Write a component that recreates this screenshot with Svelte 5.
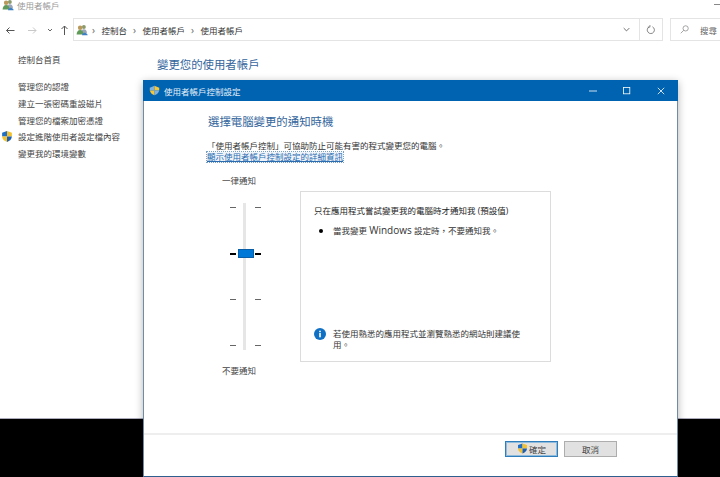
<script>
  const crumbs = ["控制台", "使用者帳戶", "使用者帳戶"];
  const navLinks = [
    { label: "管理您的認證" },
    { label: "建立一張密碼重設磁片" },
    { label: "管理您的檔案加密憑證" },
    { label: "設定進階使用者設定檔內容", shield: true },
    { label: "變更我的環境變數" },
  ];
  // slider stops, top to bottom; index 1 is the selected level
  const stops = [0, 1, 2, 3];
</script>

{#snippet users()}
  <svg class="users" viewBox="0 0 16 16" aria-hidden="true">
    <circle cx="10.5" cy="4" r="2.6" fill="#8a9a6a" />
    <path d="M6.5 12c0-3 1.6-5 4-5s4 2 4 5z" fill="#9aa6b8" />
    <circle cx="5.5" cy="5" r="3" fill="#b9985c" />
    <path d="M.8 14c0-3.6 2-6 4.7-6s4.7 2.400 4.700 6z" fill="#5f9a58" />
    <path d="M8 15c0-2 1.600-3.400 3.500-3.400S15.500 13 15.500 15z" fill="#3f7fc4" />
  </svg>
{/snippet}

{#snippet shield(cls)}
  <svg class={cls} viewBox="0 0 16 16" aria-hidden="true">
    <path d="M8 .6 1.500 3v5H8z" fill="#1f6fc4" />
    <path d="M8 .6V8h6.500V3z" fill="#f2c230" />
    <path d="M1.500 8c0 3.600 3 6 6.500 7.400V8z" fill="#f2c230" />
    <path d="M8 8v7.400c3.500-1.400 6.500-3.800 6.500-7.400z" fill="#1f5fae" />
  </svg>
{/snippet}

<div class="desktop">
  <div class="explorer">
    <div class="title-row">
      {@render users()}
      <span>使用者帳戶</span>
      <i class="win-min"></i>
    </div>

    <div class="toolbar">
      <div class="nav-btns">
        <svg viewBox="0 0 62 14" aria-hidden="true">
          <path d="M.5 7.500h8M.5 7.500l3-3M.5 7.500l3 3" stroke="#555" fill="none" />
          <path d="M22 7.500h8M30 7.500l-3-3M30 7.500l-3 3" stroke="#c8c8c8" fill="none" />
          <path d="M42 6l2 2 2-2" stroke="#666" fill="none" />
          <path d="M58.500 12V3M58.500 3l-3 3M58.500 3l3 3" stroke="#555" fill="none" />
        </svg>
      </div>
      <div class="address">
        {@render users()}
        {#each crumbs as c}
          <span class="sep">›</span>
          <span class="crumb">{c}</span>
        {/each}
        <svg class="chev" viewBox="0 0 10 6" aria-hidden="true">
          <path d="M1 1l4 4 4-4" stroke="#555" stroke-width="1.200" fill="none" />
        </svg>
      </div>
      <div class="refresh">
        <svg viewBox="0 0 14 14" aria-hidden="true">
          <path d="M9 2.500a5 5 0 1 1-4.500 0" stroke="#666" stroke-width="1.100" fill="none" />
          <path d="M4.500 0v3h-3" stroke="#666" fill="none" transform="translate(1 0)" />
        </svg>
      </div>
      <div class="search">
        <svg viewBox="0 0 12 12" aria-hidden="true">
          <circle cx="7.500" cy="4.500" r="3.500" stroke="#888" fill="none" />
          <path d="M5 7l-4 4" stroke="#888" />
        </svg>
        <span>搜尋</span>
      </div>
    </div>

    <div class="content">
      <nav class="side">
        <div class="home">控制台首頁</div>
        <ul>
          {#each navLinks as link}
            <li>
              {#if link.shield}{@render shield("nav-shield")}{/if}
              {link.label}
            </li>
          {/each}
        </ul>
      </nav>
      <h2 class="page-title">變更您的使用者帳戶</h2>
    </div>
  </div>

  <div class="dialog">
    <header class="dlg-title">
      <svg class="pin" viewBox="0 0 14 14" aria-hidden="true">
        <path d="M7 1 1 3.500V7h6z" fill="#7fb2e0" />
        <path d="M7 1l6 2.500V7H7z" fill="#f5c53a" />
        <path d="M1 7h6v6C4 12 1.500 10 1 7z" fill="#f5c53a" />
        <path d="M7 7h6c-.500 3-3 5-6 6z" fill="#7fb2e0" />
      </svg>
      <span>使用者帳戶控制設定</span>
      <div class="win-btns">
        <svg viewBox="0 0 10 10" aria-hidden="true"><path d="M0 5h10" stroke="#fff" /></svg>
        <svg viewBox="0 0 10 10" aria-hidden="true"><rect x=".5" y=".5" width="8" height="8" stroke="#fff" fill="none" /></svg>
        <svg viewBox="0 0 10 10" aria-hidden="true"><path d="M1 1l8 8M9 1l-8 8" stroke="#fff" /></svg>
      </div>
    </header>

    <div class="dlg-body">
      <h1>選擇電腦變更的通知時機</h1>
      <p class="intro">「使用者帳戶控制」可協助防止可能有害的程式變更您的電腦。</p>
      <span class="link">顯示使用者帳戶控制設定的詳細資訊</span>

      <div class="settings">
        <div class="slider-col">
          <div class="slider-label">一律通知</div>
          <div class="slider">
            <i class="track"></i>
            {#each stops as s}
              <div class="stop" class:on={s === 1}>
                <i class="tick"></i>
                {#if s === 1}<i class="thumb"></i>{/if}
                <i class="tick"></i>
              </div>
            {/each}
          </div>
          <div class="slider-label">不要通知</div>
        </div>

        <section class="panel">
          <h3>只在應用程式嘗試變更我的電腦時才通知我 (預設值)</h3>
          <div class="bullet">
            <i class="dot"></i>
            <span>當我變更 <span class="latin">Windows</span> 設定時，不要通知我。</span>
          </div>
          <div class="note">
            <svg viewBox="0 0 12 12" aria-hidden="true">
              <circle cx="6" cy="6" r="6" fill="#1070c4" />
              <rect x="5.200" y="5" width="1.600" height="4.300" fill="#fff" />
              <rect x="5.200" y="2.700" width="1.600" height="1.500" fill="#fff" />
            </svg>
            <p>若使用熟悉的應用程式並瀏覽熟悉的網站則建議使用。</p>
          </div>
        </section>
      </div>
    </div>

    <footer class="dlg-foot">
      <button class="primary">{@render shield("btn-shield")}確定</button>
      <button>取消</button>
    </footer>
  </div>
</div>

<style>
  :global(body) {
    margin: 0;
  }
  .desktop {
    position: relative;
    width: 720px;
    height: 477px;
    overflow: hidden;
    background: #000;
    font-family: "Open Sans", "Noto Sans CJK TC", sans-serif;
    font-size: 8.5px;
    color: #444;
  }
  i {
    display: block;
  }
  .explorer {
    height: 419px;
    box-sizing: border-box;
    background: #fff;
    border-bottom: 1px solid #aab;
  }
  .title-row {
    height: 9px;
    padding-left: 2px;
    display: flex;
    align-items: center;
    gap: 3px;
    color: #9a9a9a;
  }
  .users {
    width: 12px;
    height: 12px;
    flex: none;
  }
  .win-min {
    margin-left: auto;
    width: 6px;
    height: 1px;
    background: #888;
  }
  .toolbar {
    display: flex;
    align-items: center;
    height: 23px;
    margin-top: 9px;
    padding-left: 6px;
  }
  .nav-btns {
    width: 67px;
    flex: none;
  }
  .nav-btns svg {
    width: 62px;
    height: 14px;
    display: block;
  }
  .address {
    width: 567px;
    height: 23px;
    flex: none;
    box-sizing: border-box;
    display: flex;
    align-items: center;
    border: 1px solid #e4e4e4;
    padding-left: 2px;
  }
  .address .users {
    margin-right: 4px;
  }
  .sep {
    color: #666;
    font-size: 10px;
    width: 9.500px;
    line-height: 1;
  }
  .crumb {
    color: #333;
    margin-right: 6px;
  }
  .chev {
    margin-left: auto;
    margin-right: 9px;
    width: 7px;
    height: 5px;
  }
  .refresh {
    width: 23px;
    height: 23px;
    flex: none;
    box-sizing: border-box;
    border: 1px solid #e4e4e4;
    border-left: 0;
    display: flex;
    align-items: center;
    justify-content: center;
  }
  .refresh svg {
    width: 10px;
    height: 10px;
  }
  .search {
    margin-left: 7px;
    width: 80px;
    height: 23px;
    flex: none;
    box-sizing: border-box;
    border: 1px solid #e4e4e4;
    display: flex;
    align-items: center;
    padding-left: 9px;
    gap: 11px;
    color: #666;
  }
  .search svg {
    width: 9px;
    height: 9px;
    flex: none;
  }
  .content {
    display: flex;
    padding-top: 13px;
  }
  .side {
    width: 157px;
    flex: none;
    padding-left: 18px;
    box-sizing: border-box;
  }
  .home {
    line-height: 12px;
  }
  .side ul {
    list-style: none;
    margin: 15px 0 0;
    padding: 0;
  }
  .side li {
    position: relative;
    height: 16.750px;
    line-height: 12px;
    white-space: nowrap;
  }
  .nav-shield {
    position: absolute;
    left: -17px;
    top: -1px;
    width: 12px;
    height: 13px;
  }
  .page-title {
    margin: 3px 0 0;
    font-weight: 400;
    font-size: 11.400px;
    line-height: 16px;
    color: #33659c;
  }
  .dialog {
    position: absolute;
    left: 143px;
    top: 80px;
    width: 535px;
    height: 397px;
    box-sizing: border-box;
    background: #fff;
    border: 1px solid #6f8ba5;
    border-top: 0;
    border-bottom: 1px solid #2f5f8f;
    box-shadow: 0 2px 8px rgba(0, 0, 0, 0.3);
    display: flex;
    flex-direction: column;
  }
  .dlg-title {
    height: 21px;
    flex: none;
    margin: 0 -1px;
    background: #0063b1;
    color: #e6f0f8;
    display: flex;
    align-items: center;
    padding-left: 6px;
    gap: 4px;
  }
  .pin {
    width: 11px;
    height: 11px;
  }
  .win-btns {
    margin-left: auto;
    display: flex;
    gap: 26px;
    padding-right: 13px;
  }
  .win-btns svg {
    width: 8px;
    height: 8px;
    display: block;
  }
  .dlg-body {
    flex: 1;
    padding: 13px 0 0 63px;
  }
  h1 {
    margin: 0;
    font-weight: 400;
    font-size: 11.400px;
    line-height: 16px;
    color: #33659c;
    padding-left: 1px;
  }
  .intro {
    margin: 10px 0 0;
    line-height: 11px;
    color: #333;
    white-space: nowrap;
  }
  .link {
    display: inline-block;
    line-height: 10px;
    color: #2b6cb0;
    text-decoration: underline;
    outline: 1px dotted #7aa0c4;
    background: #eef4fa;
    margin-top: 1px;
  }
  .settings {
    display: flex;
    margin-top: 31px;
    margin-left: 14px;
  }
  .slider-col {
    width: 79px;
    flex: none;
  }
  .slider-label {
    width: 36px;
    padding-left: 1px;
    line-height: 12px;
    white-space: nowrap;
    color: #444;
  }
  .slider-col .slider-label:first-child {
    margin-top: -18px;
  }
  .slider {
    position: relative;
    width: 31px;
    height: 147px;
    margin: 16px 0 15px 9px;
    display: flex;
    flex-direction: column;
    justify-content: space-between;
    padding: 4px 0;
    box-sizing: border-box;
  }
  .track {
    position: absolute;
    left: 13px;
    top: 0;
    bottom: 0;
    width: 3px;
    background: #e6e6e6;
  }
  .stop {
    position: relative;
    display: flex;
    align-items: center;
    justify-content: space-between;
    height: 1px;
  }
  .tick {
    width: 6px;
    height: 1px;
    background: #666;
  }
  .stop.on .tick {
    height: 2px;
    background: #000;
  }
  .thumb {
    width: 16px;
    height: 9px;
    background: #0078d7;
    border: 1px solid #0a5ea8;
    box-sizing: border-box;
    position: relative;
  }
  .panel {
    width: 251px;
    height: 171px;
    box-sizing: border-box;
    border: 1px solid #dcdcdc;
    padding: 13px 13px 11px;
    display: flex;
    flex-direction: column;
    margin-top: -2px;
    color: #333;
  }
  h3 {
    margin: 0;
    font-weight: 400;
    font-size: 8.500px;
    line-height: 12px;
    color: #222;
  }
  .bullet {
    display: flex;
    align-items: center;
    margin-top: 7px;
    padding-left: 5px;
    line-height: 12px;
  }
  .latin {
    font-size: 10px;
  }
  .dot {
    width: 4px;
    height: 4px;
    border-radius: 50%;
    background: #000;
    margin-right: 10px;
    flex: none;
  }
  .note {
    margin-top: auto;
    display: flex;
    gap: 7px;
  }
  .note svg {
    width: 12px;
    height: 12px;
    flex: none;
  }
  .note p {
    margin: 0;
    width: 198px;
    line-height: 11px;
  }
  .dlg-foot {
    height: 43px;
    flex: none;
    box-sizing: border-box;
    border-top: 2px solid #eeeeee;
    display: flex;
    justify-content: flex-end;
    gap: 6px;
    padding: 6px 60px 0 0;
    background: #fff;
  }
  button {
    width: 53px;
    height: 16px;
    padding: 0;
    font: inherit;
    color: #444;
    background: #e1e1e1;
    border: 1px solid #adadad;
    display: flex;
    align-items: center;
    justify-content: center;
    box-sizing: border-box;
  }
  button.primary {
    border: 1px solid #2f7dba;
    box-shadow: inset 0 0 0 1px #8fbbdd;
    gap: 1px;
    justify-content: flex-start;
    padding-left: 11px;
  }
  .btn-shield {
    width: 11px;
    height: 13px;
    flex: none;
    margin-top: -2px;
  }
</style>
